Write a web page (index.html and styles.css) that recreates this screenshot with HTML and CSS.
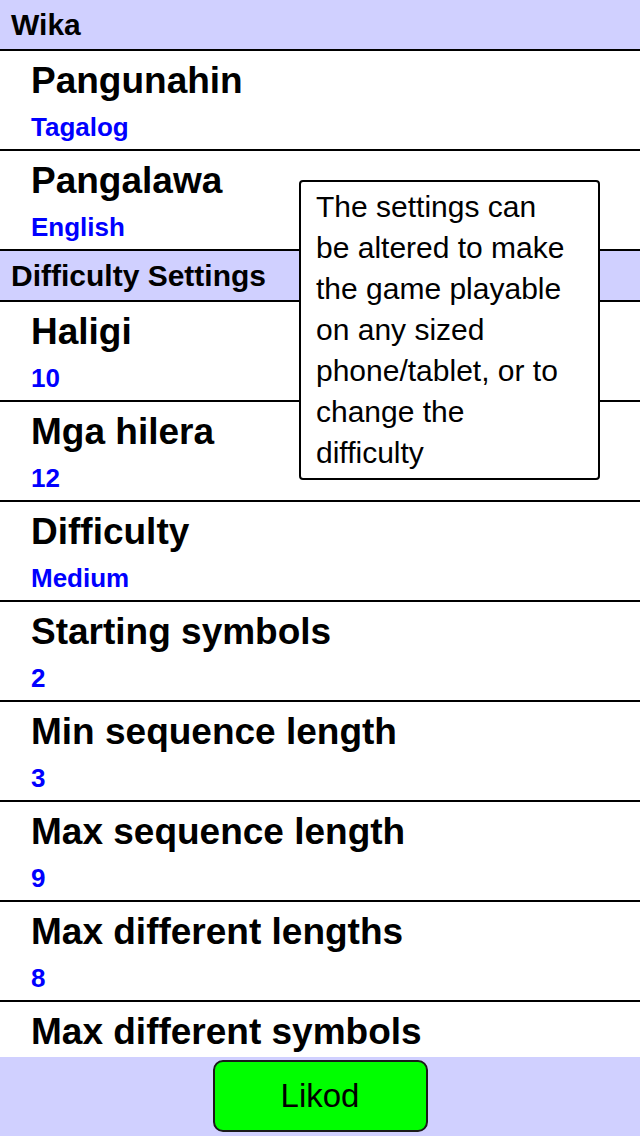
FILE: index.html
```html
<!DOCTYPE html>
<html lang="tl">

<head>
    <meta charset="UTF-8">
    <meta name="viewport" content="width=device-width, initial-scale=1.0">
    <title>Settings</title>
    <link rel="stylesheet" href="styles.css">
</head>

<body>
    <div class="screen">
        <div class="list">
            <div class="group">Wika</div>
            <div class="item">
                <div class="title">Pangunahin</div>
                <div class="value">Tagalog</div>
            </div>
            <div class="item">
                <div class="title">Pangalawa</div>
                <div class="value">English</div>
            </div>
            <div class="group">Difficulty Settings</div>
            <div class="item">
                <div class="title">Haligi</div>
                <div class="value">10</div>
            </div>
            <div class="item">
                <div class="title">Mga hilera</div>
                <div class="value">12</div>
            </div>
            <div class="item">
                <div class="title">Difficulty</div>
                <div class="value">Medium</div>
            </div>
            <div class="item">
                <div class="title">Starting symbols</div>
                <div class="value">2</div>
            </div>
            <div class="item">
                <div class="title">Min sequence length</div>
                <div class="value">3</div>
            </div>
            <div class="item">
                <div class="title">Max sequence length</div>
                <div class="value">9</div>
            </div>
            <div class="item">
                <div class="title">Max different lengths</div>
                <div class="value">8</div>
            </div>
            <div class="item">
                <div class="title">Max different symbols</div>
            </div>
        </div>
        <div class="footer">
            <button class="back">Likod</button>
        </div>

        <!-- hint popup over the list -->
        <div class="hint">The settings can be altered to make the game playable on any sized phone/tablet, or to change the difficulty</div>
    </div>
</body>

</html>
```

FILE: styles.css
```css
* {
    margin: 0;
    padding: 0;
    box-sizing: border-box;
}

body {
    font-family: "Liberation Sans", Arial, sans-serif;
    color: #000;
    background: #fff;
}

.screen {
    position: relative;
    width: 640px;
    height: 1136px;
    display: flex;
    flex-direction: column;
    overflow: hidden;
}

.list {
    flex: 1;
    overflow: hidden;
}

.group {
    height: 51px;
    padding: 1px 0 0 11px;
    font-size: 30px;
    font-weight: bold;
    line-height: 48px;
    background: #d0d0ff;
    border-bottom: 2px solid #000;
}

.item {
    height: 100px;
    padding: 9px 0 0 31px;
    border-bottom: 2px solid #000;
}

.title {
    font-size: 37px;
    font-weight: bold;
    line-height: 42px;
    margin-bottom: 10px;
    white-space: nowrap;
}

.value {
    font-size: 26px;
    font-weight: bold;
    line-height: 30px;
    color: #0000ff;
}

.footer {
    height: 79px;
    padding-top: 3px;
    background: #d0d0ff;
    display: flex;
    justify-content: center;
    align-items: flex-start;
}

.back {
    width: 215px;
    height: 72px;
    background: #00ff00;
    border: 2px solid #1a1a1a;
    border-radius: 10px;
    font-family: "Liberation Sans", Arial, sans-serif;
    font-size: 33px;
    color: #000;
}

.hint {
    position: absolute;
    left: 299px;
    top: 180px;
    width: 301px;
    height: 300px;
    padding: 4px 27px 0 15px;
    background: #fff;
    border: 2px solid #000;
    border-radius: 4px;
    font-size: 30px;
    line-height: 41px;
}
```
